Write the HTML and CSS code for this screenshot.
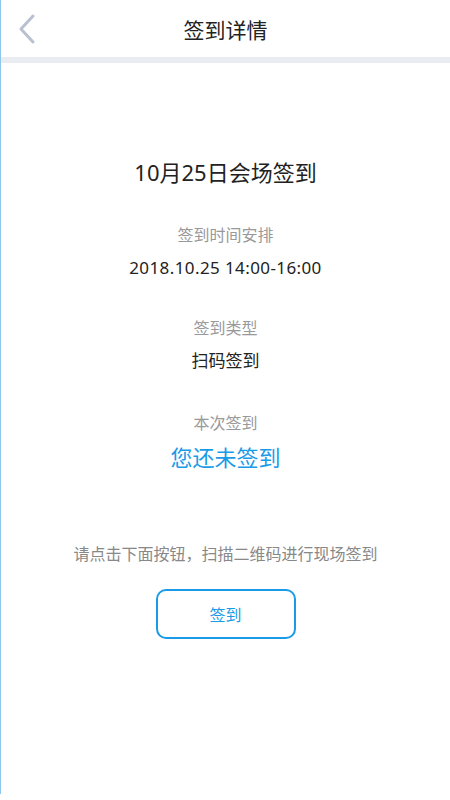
FILE: index.html
```html
<!DOCTYPE html>
<html>
<head>
  <meta charset="utf-8">
  <meta name="viewport" content="width=device-width, initial-scale=1">
  <title>签到详情</title>
  <link rel="stylesheet" href="styles.css">
</head>
<body>
  <div class="page">
    <div class="header">
      <span class="back">
        <svg width="20" height="30" viewBox="0 0 20 30">
          <polyline points="16,2 4,15 16,28" fill="none" stroke="#b9c1d0" stroke-width="3" stroke-linecap="round" stroke-linejoin="round"/>
        </svg>
      </span>
      <div class="title">签到详情</div>
    </div>
    <div class="divider"></div>
    <div class="content">
      <div class="name">10月25日会场签到</div>
      <div class="label first">签到时间安排</div>
      <div class="value date">2018.10.25 14:00-16:00</div>
      <div class="label">签到类型</div>
      <div class="value">扫码签到</div>
      <div class="label third">本次签到</div>
      <div class="status">您还未签到</div>
      <div class="hint">请点击下面按钮，扫描二维码进行现场签到</div>
      <button class="btn">签到</button>
    </div>
  </div>
</body>
</html>
```

FILE: styles.css
```css
* {
  margin: 0;
  padding: 0;
  box-sizing: border-box;
}

body {
  font-family: "Noto Sans", "Noto Sans CJK SC", sans-serif;
  color: #222;
  background: #fff;
}

.page {
  height: 794px;
  border-left: 1px solid #8ec6ee;
}

.header {
  position: relative;
  height: 57px;
  display: flex;
  align-items: center;
  justify-content: center;
}

.back {
  position: absolute;
  left: 16px;
  top: 14px;
}

.title {
  font-size: 21px;
  color: #222;
}

.divider {
  height: 6px;
  background: #e9edf2;
}

.content {
  padding-top: 94px;
  text-align: center;
}

.name {
  font-size: 22px;
  line-height: 30px;
  color: #222;
}

.label {
  margin-top: 36px;
  font-size: 16px;
  line-height: 24px;
  color: #999;
}

.label.third {
  margin-top: 38px;
}

.value {
  margin-top: 9px;
  font-size: 17px;
  line-height: 24px;
  color: #222;
}

.value.date {
  letter-spacing: 0.4px;
}

.status {
  margin-top: 7px;
  font-size: 22px;
  line-height: 30px;
  color: #1a9be8;
}

.hint {
  margin-top: 70px;
  font-size: 16px;
  line-height: 24px;
  color: #888;
}

.btn {
  display: block;
  margin: 23px auto 0;
  width: 140px;
  height: 50px;
  border: 2px solid #1a9be8;
  border-radius: 10px;
  background: #fff;
  font-family: inherit;
  font-size: 16px;
  color: #1a9be8;
}
```
